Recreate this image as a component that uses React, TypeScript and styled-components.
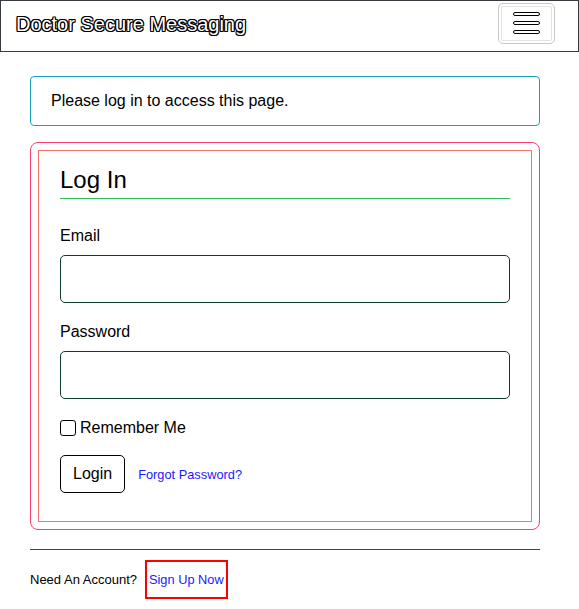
import React from "react";
import styled, { createGlobalStyle } from "styled-components";

const Global = createGlobalStyle`
  html, body { margin: 0; padding: 0; background: #fff; }
  body { font-family: "Liberation Sans", Arial, sans-serif; color: #000; }
  * { box-sizing: border-box; }
`;

const Navbar = styled.nav`
  height: 52px;
  border: 1px solid #343a40;
  display: flex;
  align-items: center;
  justify-content: space-between;
  padding: 0 23px 0 15px;
`;

const Brand = styled.span`
  font-size: 20px;
  color: #fff;
  text-shadow: -1px -1px 0 #000, 1px -1px 0 #000, -1px 1px 0 #000, 1px 1px 0 #000,
    -1px 0 0 #000, 1px 0 0 #000, 0 -1px 0 #000, 0 1px 0 #000;
  margin-top: -4px;
`;

const Toggler = styled.button`
  width: 57px;
  height: 41px;
  margin-top: -6px;
  border: 1px solid #c8c8c8;
  border-radius: 5px;
  background: #fff;
  box-shadow: inset 0 0 0 2px #fff, inset 0 0 0 3px #e2e2e2;
  display: flex;
  flex-direction: column;
  align-items: center;
  justify-content: center;
  gap: 5px;
  padding: 0;
`;

const Bar = styled.span`
  display: block;
  width: 27px;
  height: 4px;
  border: 1px solid #000;
  border-radius: 2px;
  background: #fff;
`;

const Container = styled.main`
  padding: 24px 39px 0 30px;
`;

const Alert = styled.div`
  border: 1px solid #17a2b8;
  border-radius: 4px;
  padding: 12px 20px;
  font-size: 16px;
  line-height: 24px;
  margin-bottom: 16px;
`;

const OuterCard = styled.section`
  border: 1px solid #ff3d6e;
  border-radius: 8px;
  padding: 7px;
`;

const InnerCard = styled.div`
  border: 1px solid #f87171;
  padding: 14px 21px 28px;
`;

const Title = styled.h2`
  margin: 0 0 26px;
  font-size: 24px;
  font-weight: normal;
  line-height: 29px;
  padding-bottom: 4px;
  border-bottom: 1px solid #2ebd5f;
`;

const Field = styled.div`
  margin-bottom: 18px;
`;

const Label = styled.label`
  display: block;
  font-size: 16px;
  line-height: 24px;
  margin: -1px 0 7px;
`;

const Input = styled.input`
  display: block;
  width: 100%;
  height: 48px;
  border: 1px solid #0b3d2c;
  border-radius: 5px;
  background: #fff;
  font-size: 16px;
  padding: 6px 12px;
`;

const CheckRow = styled.label`
  display: flex;
  align-items: center;
  gap: 4px;
  font-size: 16px;
  line-height: 24px;
  margin: -1px 0 15px;
`;

const Check = styled.span`
  width: 16px;
  height: 16px;
  border: 1px solid #000;
  border-radius: 3px;
  display: inline-block;
`;

const ActionRow = styled.div`
  display: flex;
  align-items: center;
  gap: 13px;
`;

const LoginButton = styled.button`
  height: 38px;
  padding: 0 12px;
  border: 1px solid #000;
  border-radius: 5px;
  background: #fff;
  font-family: "Liberation Sans", Arial, sans-serif;
  font-size: 16px;
  color: #000;
`;

const Link = styled.a<{ $boxed?: boolean }>`
  font-size: 12.8px;
  color: #1a1aff;
  text-decoration: none;
  ${(p) => (p.$boxed ? "border: 2px solid #ff0000; padding: 10px 2px; display: inline-block;" : "")}
`;

const Rule = styled.hr`
  margin: 19px 0 10px;
  border: 0;
  border-top: 1px solid #3d454c;
`;

const Footer = styled.div`
  display: flex;
  align-items: center;
  gap: 8px;
  font-size: 13px;
`;

export default function App() {
  return (
    <>
      <Global />
      <Navbar>
        <Brand>Doctor Secure Messaging</Brand>
        <Toggler aria-label="Toggle navigation">
          <Bar />
          <Bar />
          <Bar />
        </Toggler>
      </Navbar>
      <Container>
        <Alert>Please log in to access this page.</Alert>
        <OuterCard>
          <InnerCard>
            <Title>Log In</Title>
            <Field>
              <Label>Email</Label>
              <Input type="email" />
            </Field>
            <Field>
              <Label>Password</Label>
              <Input type="password" />
            </Field>
            <CheckRow>
              <Check />
              Remember Me
            </CheckRow>
            <ActionRow>
              <LoginButton>Login</LoginButton>
              <Link href="#">Forgot Password?</Link>
            </ActionRow>
          </InnerCard>
        </OuterCard>
        <Rule />
        <Footer>
          <span>Need An Account?</span>
          <Link href="#" $boxed>
            Sign Up Now
          </Link>
        </Footer>
      </Container>
    </>
  );
}
